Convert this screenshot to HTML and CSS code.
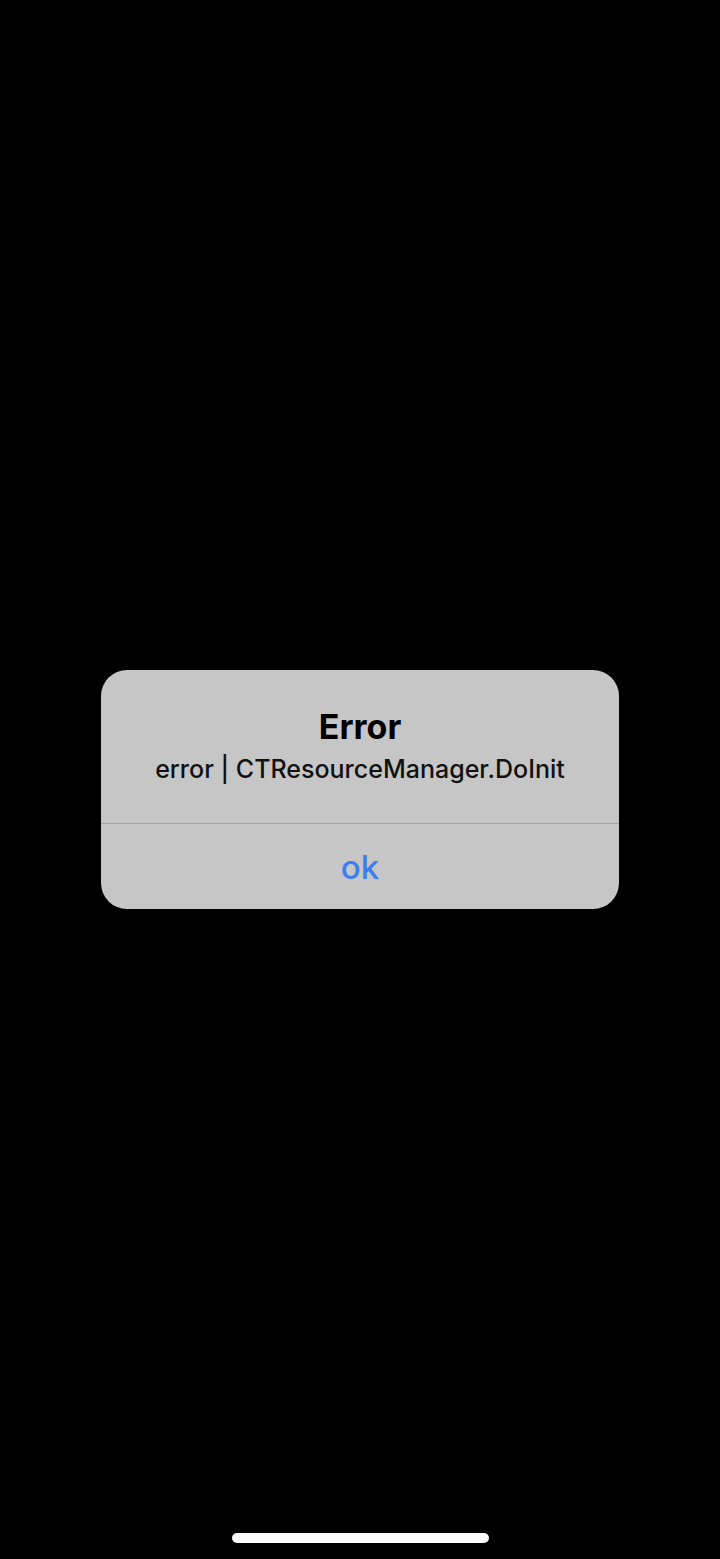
FILE: index.html
```html
<!DOCTYPE html>
<html>
<head>
<meta charset="utf-8">
<link rel="stylesheet" href="styles.css">
</head>
<body>
<div class="screen">
  <div class="alert">
    <div class="alert-body">
      <div class="alert-title">Error</div>
      <div class="alert-message">error | CTResourceManager.DoInit</div>
    </div>
    <div class="alert-actions">
      <div class="alert-button">ok</div>
    </div>
  </div>
  <div class="home-indicator"></div>
</div>
</body>
</html>
```
FILE: styles.css
```css
html, body {
  margin: 0;
  padding: 0;
  background: #000;
}
.screen {
  width: 720px;
  height: 1559px;
  background: #000;
  position: relative;
  display: flex;
  flex-direction: column;
  align-items: center;
  font-family: Inter, "Liberation Sans", sans-serif;
}
.alert {
  margin-top: 670px;
  width: 518px;
  background: #c6c6c6;
  border-radius: 26px;
  overflow: hidden;
  display: flex;
  flex-direction: column;
}
.alert-body {
  height: 154px;
  box-sizing: border-box;
  padding-top: 37px;
  display: flex;
  flex-direction: column;
  align-items: center;
  border-bottom: 1px solid #a3a3a3;
}
.alert-title {
  font-size: 34px;
  font-weight: 700;
  line-height: 40px;
  color: #000;
}
.alert-message {
  font-size: 25px;
  font-weight: 500;
  line-height: 30px;
  margin-top: 7px;
  color: #111;
}
.alert-actions {
  height: 85px;
  display: flex;
  align-items: center;
  justify-content: center;
}
.alert-button {
  font-size: 33px;
  font-weight: 500;
  color: #3a7ff0;
  line-height: 40px;
  margin-top: 1px;
}
.home-indicator {
  position: absolute;
  left: 232px;
  top: 1533px;
  width: 257px;
  height: 10px;
  border-radius: 5px;
  background: #fff;
}
```
